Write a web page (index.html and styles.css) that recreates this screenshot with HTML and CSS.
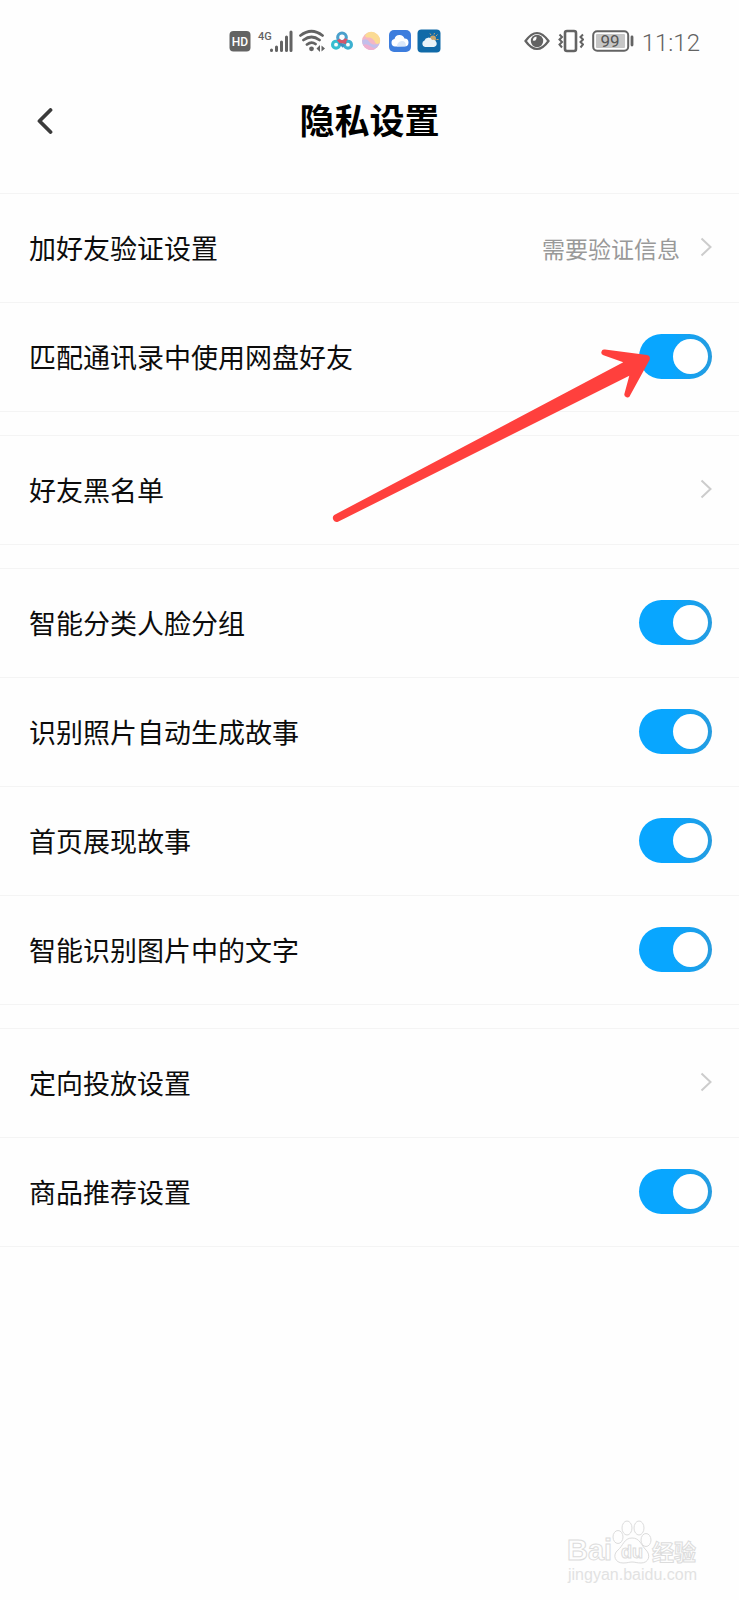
FILE: index.html
```html
<!DOCTYPE html>
<html lang="zh-CN">
<head>
<meta charset="utf-8">
<meta name="viewport" content="width=device-width, initial-scale=1">
<title>隐私设置</title>
<link rel="stylesheet" href="styles.css">
</head>
<body>
<div class="screen">
  <div class="status">
    <div class="status-group status-left">
      <svg width="22" height="24" viewBox="0 0 22 24" aria-hidden="true"><rect x="0.500" y="2" width="21" height="20.500" rx="4" fill="#636363"/><text x="11" y="17" class="hd-text">HD</text></svg>
      <svg width="36" height="24" viewBox="0 0 36 24" aria-hidden="true"><text x="1" y="11" class="net-text">4G</text><g stroke="#636363" stroke-width="3" stroke-linecap="round"><path d="M14.500 21v.5M19.500 18v3.500M24.500 13v8.500M29.500 8v13.500M34 3v18.500"/></g></svg>
      <svg width="26" height="24" viewBox="0 0 26 24" aria-hidden="true"><g fill="none" stroke="#636363" stroke-width="2.800" stroke-linecap="round"><path d="M1.500 6.500Q12.500-2 23.500 6.500M4.500 11Q12.500 5 20.500 11M8 15.500Q12.500 12 16.500 15"/></g><circle cx="12.500" cy="19.800" r="2.400" fill="#636363"/><path d="M17.500 19.500l3.500-3.500v7zM26 19.500l-3.500-3v6z" fill="#636363"/></svg>
      <svg width="22" height="24" viewBox="0 0 24 24" aria-hidden="true"><g fill="none" stroke-width="3.400"><circle cx="5.500" cy="16" r="3.800" stroke="#36bfd0"/><circle cx="18.500" cy="16" r="3.800" stroke="#3cb0d0"/><path d="M9 13.500l5 4.500" stroke="#3f8fc0"/><path d="M15.500 12.500l-1 2.500" stroke="#c9586c"/><circle cx="12" cy="8" r="4.700" stroke="#4ba0cc"/><path d="M8 10.500a4.700 4.700 0 0 0 8.500-1" stroke="#d9566a"/></g></svg>
      <svg width="24" height="24" viewBox="0 0 24 24" aria-hidden="true"><circle cx="12" cy="12" r="9" fill="#f4b6c4"/><path d="M9 3.500a9 9 0 0 1 12 10Q19 16 16.500 14 14 8 9 8.500 6.500 9 6 6.500 7 4.500 9 3.500z" fill="#fbdb94"/><path d="M3 11.500c4-3 6-.5 8 2s6 2.500 9.500 1A9 9 0 0 1 3 11.500z" fill="#c3bfeb"/><path d="M4 16c4-3 8 3 13 3.500A9 9 0 0 1 4 16z" fill="#eeb0d0"/></svg>
      <svg width="22" height="24" viewBox="0 0 22 24" aria-hidden="true"><rect y="1" width="22" height="22" rx="5" fill="#3d7ddd"/><path d="M6 17.500a3.800 3.800 0 0 1-.5-7.500 5.200 5.200 0 0 1 10-.5 4 4 0 0 1 0 8z" fill="#fff"/><path d="M8 17.500q0-5 5-5.500 4 0 4 5z" fill="#dbe8fa"/></svg>
      <svg width="24" height="24" viewBox="0 0 24 24" aria-hidden="true"><rect x=".5" y=".5" width="23" height="23" rx="4" fill="#106aa8"/><circle cx="16" cy="9.500" r="3" fill="#c8a56e"/><path d="M14 6l-1-1.500M17 5.500l.5-1.500M19 7l1.500-1.500M19.500 10.500h2" stroke="#c8a56e"/><path d="M8 18a3.400 3.400 0 0 1-.5-6.500 4 4 0 0 1 7.500-.5 3.600 3.600 0 0 1 2 7z" fill="#e9f3f8"/></svg>
    </div>
    <div class="status-group status-right">
      <svg width="26" height="24" viewBox="0 0 26 24" aria-hidden="true"><path d="M1.500 12Q13-4 24.500 12 13 28 1.500 12z" fill="none" stroke="#636363" stroke-width="2.200"/><circle cx="13" cy="12" r="6.200" fill="#636363"/><path d="M12.500 7.500Q9 8 8.800 11.500 13 12.500 12.500 7.500z" fill="#fff"/></svg>
      <svg width="26" height="24" viewBox="0 0 26 24" aria-hidden="true"><g fill="none" stroke="#636363" stroke-width="2.200"><rect x="7" y="2" width="11" height="20" rx="2" stroke-width="2.600"/><path d="M1.500 5.500l2.500 2.500-2.500 2.500 2.500 2.500-2.500 2.500 2.500 3M25 5.500l-2.500 2.500 2.500 2.500-2.500 2.500 2.500 2.500-2.500 3" stroke-width="2"/></g></svg>
      <svg width="42" height="24" viewBox="0 0 42 24" aria-hidden="true"><rect x="1.200" y="2.200" width="35" height="19.600" rx="4" fill="#fff" stroke="#636363" stroke-width="2"/><rect x="4" y="5" width="29" height="14" rx="1" fill="#c6c6c6"/><text x="18" y="18" class="battery-text">99</text><path d="M40 8v8" stroke="#636363" stroke-width="2.800" stroke-linecap="round"/></svg>
      <span class="clock">11:12</span>
    </div>
  </div>

  <header class="header">
    <button class="back" type="button" aria-label="返回"><svg width="16" height="26" viewBox="0 0 16 26" aria-hidden="true"><path d="M13.500 2L2.500 13l11 11" fill="none" stroke="#3b3b3b" stroke-width="3.800" stroke-linecap="round" stroke-linejoin="round"/></svg></button>
    <h1 class="title">隐私设置</h1>
  </header>

  <main class="settings">
    <section class="group">
      <button class="row" type="button"><span class="label">加好友验证设置</span><span class="value">需要验证信息</span><svg class="chevron" viewBox="0 0 12 20" aria-hidden="true"><path d="M1.500 1.500L10.500 10l-9 8.500"/></svg></button>
      <div class="row row-marked"><label class="label" for="match">匹配通讯录中使用网盘好友</label><input class="switch" type="checkbox" role="switch" id="match" checked>
        <svg class="arrow" width="320" height="176" viewBox="331 348 320 176" aria-hidden="true"><path d="M334.200 515L623.300 362.300L603.500 355.200A2.800 2.800 0 0 1 605 349.600L647 355Q651 356 649.500 360L630.200 395.200A2.900 2.900 0 0 1 624.500 393.500L629.300 375.700L338 521.800A4 4 0 0 1 334.200 515Z" fill="#ff403d"/></svg>
      </div>
    </section>
    <section class="group">
      <button class="row" type="button"><span class="label">好友黑名单</span><svg class="chevron" viewBox="0 0 12 20" aria-hidden="true"><path d="M1.500 1.500L10.500 10l-9 8.500"/></svg></button>
    </section>
    <section class="group">
      <div class="row"><label class="label" for="faces">智能分类人脸分组</label><input class="switch" type="checkbox" role="switch" id="faces" checked></div>
      <div class="row"><label class="label" for="stories">识别照片自动生成故事</label><input class="switch" type="checkbox" role="switch" id="stories" checked></div>
      <div class="row"><label class="label" for="home">首页展现故事</label><input class="switch" type="checkbox" role="switch" id="home" checked></div>
      <div class="row"><label class="label" for="ocr">智能识别图片中的文字</label><input class="switch" type="checkbox" role="switch" id="ocr" checked></div>
    </section>
    <section class="group">
      <button class="row" type="button"><span class="label">定向投放设置</span><svg class="chevron" viewBox="0 0 12 20" aria-hidden="true"><path d="M1.500 1.500L10.500 10l-9 8.500"/></svg></button>
      <div class="row"><label class="label" for="goods">商品推荐设置</label><input class="switch" type="checkbox" role="switch" id="goods" checked></div>
    </section>
  </main>

  <footer class="footer">
    <svg width="134" height="68" viewBox="0 0 134 68">
      <g class="mark-outline">
        <text x="0" y="40" class="mark-bai">Bai</text>
        <ellipse cx="51" cy="17" rx="5" ry="6.500"/><ellipse cx="60" cy="8" rx="5" ry="7"/><ellipse cx="72" cy="8" rx="5" ry="7"/><ellipse cx="79" cy="20" rx="5" ry="6.500"/>
        <path d="M65 18c-8 0-9 8-14 12-6 5-3 13 5 13 5 0 6-1 9-1s5 1 9 1c8 0 10-8 5-13s-6-12-14-12z"/>
        <text x="54" y="38" class="mark-du">du</text>
        <text x="85" y="40" class="mark-cn">经验</text>
      </g>
      <text x="1" y="60" class="mark-url">jingyan.baidu.com</text>
    </svg>
  </footer>
</div>
</body>
</html>
```
FILE: styles.css
```css
* { box-sizing: border-box; }
body {
  margin: 0;
  background: #fefefe;
  color: #0c0c0c;
  font-family: "Noto Sans CJK SC", sans-serif;
}
.screen { display: flex; flex-direction: column; min-height: 100vh; }

.status {
  display: flex;
  justify-content: space-between;
  align-items: center;
  height: 82px;
  padding: 0 39px 0 31%;
}
.status-group { display: flex; align-items: center; }
.status-left { gap: 6px; }
.status-right { gap: 8px; }
.status svg { display: block; flex: none; }
.clock {
  padding-top: 3px;
  color: #636363;
  font: 300 24px/24px Roboto, sans-serif;
}
.hd-text { fill: #fff; font: 500 12px Roboto, sans-serif; text-anchor: middle; }
.net-text { fill: #636363; font: 500 11px Roboto, sans-serif; }
.battery-text { fill: #555; font: 17px Roboto, sans-serif; text-anchor: middle; }

.header {
  display: grid;
  grid-template-columns: 80px 1fr 80px;
  align-items: center;
  height: 77px;
  margin-bottom: 34px;
}
.back {
  display: flex;
  justify-content: center;
  padding: 12px;
  border: 0;
  background: none;
}
.back svg { margin-left: 10px; }
.title {
  margin: 0;
  padding-bottom: 4px;
  color: #000;
  font-size: 35px;
  line-height: 48px;
  font-weight: 700;
  text-align: center;
}

.group { border-top: 1px solid #f4f4f4; }
.group + .group { margin-top: 23px; }
.row {
  display: flex;
  align-items: center;
  width: 100%;
  height: 109px;
  padding: 0 27px 2px 29px;
  border: 0;
  border-bottom: 1px solid #f4f4f4;
  background: none;
  color: inherit;
  font: inherit;
  text-align: left;
}
.row-marked { position: relative; }
.label { flex: 1; padding-top: 2px; font-size: 27px; line-height: 40px; }
.value { padding-top: 2px; color: #999; font-size: 23px; line-height: 40px; }
.chevron { width: 12px; height: 20px; margin-left: 20px; }
.chevron path { fill: none; stroke: #ccc; stroke-width: 2; }

.switch {
  appearance: none;
  flex: none;
  display: flex;
  align-items: center;
  width: 73px;
  height: 45px;
  margin: 0;
  padding: 4px;
  border-radius: 23px;
  background: #ccc;
}
.switch::before {
  content: "";
  width: 35px;
  height: 35px;
  border-radius: 50%;
  background: #fff;
}
.switch:checked {
  justify-content: flex-end;
  background: linear-gradient(90deg, #08a6ff 45%, #269cdf);
}
.arrow { position: absolute; right: 88px; top: 45px; pointer-events: none; }

.footer {
  display: flex;
  justify-content: flex-end;
  margin-top: auto;
  padding: 0 38px 12px;
}
.mark-outline { fill: #fefefe; stroke: #dcdcdc; stroke-width: 1; }
.mark-bai { font: bold 29px "Liberation Sans", sans-serif; }
.mark-du { font: bold 18px "Liberation Sans", sans-serif; }
.mark-cn { font: bold 22px "Noto Sans CJK SC", sans-serif; }
.mark-url { fill: #e2e2e2; font: 16px "Liberation Sans", sans-serif; }
```
